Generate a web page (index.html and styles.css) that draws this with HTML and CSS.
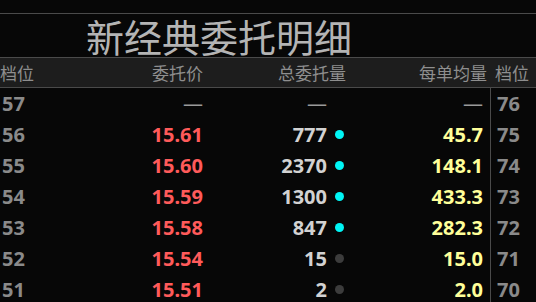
FILE: index.html
```html
<!DOCTYPE html>
<html>
<head>
<meta charset="utf-8">
<link rel="stylesheet" href="styles.css">
</head>
<body>
<div class="page">
  <div class="title">新经典委托明细</div>
  <div class="head">
    <span class="h-lvl">档位</span>
    <span class="h-price">委托价</span>
    <span class="h-vol">总委托量</span>
    <span class="h-avg">每单均量</span>
    <span class="h-lvl2">档位</span>
  </div>
  <div class="rows">
    <div class="row"><span class="lvl">57</span><span class="price dash">—</span><span class="vol dash">—</span><span class="dotc"></span><span class="avg dash">—</span><span class="lvl2">76</span></div>
    <div class="row"><span class="lvl">56</span><span class="price">15.61</span><span class="vol">777</span><span class="dotc"><i class="dot on"></i></span><span class="avg">45.7</span><span class="lvl2">75</span></div>
    <div class="row"><span class="lvl">55</span><span class="price">15.60</span><span class="vol">2370</span><span class="dotc"><i class="dot on"></i></span><span class="avg">148.1</span><span class="lvl2">74</span></div>
    <div class="row"><span class="lvl">54</span><span class="price">15.59</span><span class="vol">1300</span><span class="dotc"><i class="dot on"></i></span><span class="avg">433.3</span><span class="lvl2">73</span></div>
    <div class="row"><span class="lvl">53</span><span class="price">15.58</span><span class="vol">847</span><span class="dotc"><i class="dot on"></i></span><span class="avg">282.3</span><span class="lvl2">72</span></div>
    <div class="row"><span class="lvl">52</span><span class="price">15.54</span><span class="vol">15</span><span class="dotc"><i class="dot off"></i></span><span class="avg">15.0</span><span class="lvl2">71</span></div>
    <div class="row"><span class="lvl">51</span><span class="price">15.51</span><span class="vol">2</span><span class="dotc"><i class="dot off"></i></span><span class="avg">2.0</span><span class="lvl2">70</span></div>
  </div>
</div>
</body>
</html>
```
FILE: styles.css
```css
html, body {
  margin: 0;
  padding: 0;
  background: #070707;
  overflow: hidden;
}
.page {
  width: 536px;
  height: 302px;
  padding-top: 13px;
  box-sizing: border-box;
  font-family: "Noto Sans", "Noto Sans CJK SC", sans-serif;
}
.title {
  border-top: 1px solid #4a4a4a;
  height: 43px;
  padding-left: 86px;
  font-family: "Noto Sans CJK SC", sans-serif;
  font-size: 38px;
  line-height: 43px;
  color: #b4b4b4;
  white-space: nowrap;
}
.head {
  display: grid;
  grid-template-columns: 60px 143px 143px 141px 1fr;
  height: 29px;
  border-top: 1px solid #4a4a4a;
  border-bottom: 1px solid #4a4a4a;
  background: #1d1d1d;
  font-family: "Noto Sans CJK SC", sans-serif;
  font-size: 17px;
  line-height: 29px;
  color: #8e8e8e;
  white-space: nowrap;
}
.h-lvl { padding-left: 0; }
.h-price, .h-vol, .h-avg { text-align: right; }
.h-lvl2 { padding-left: 8px; }
.rows {
  display: flex;
  flex-direction: column;
}
.row {
  display: grid;
  grid-template-columns: 60px 143px 124px 24px 132px 7px 1fr;
  height: 31px;
  line-height: 31px;
  font-size: 20px;
  font-weight: 700;
  white-space: nowrap;
}
.row > span:nth-child(6) { grid-column: 7; }
.lvl { padding-left: 2px; color: #8a8a8a; }
.price { text-align: right; color: #ff5a5a; }
.vol { text-align: right; color: #d2d2d2; }
.avg { text-align: right; color: #ffff99; }
.dash { color: #9a9a9a; font-weight: 400; }
.lvl2 {
  border-left: 1px solid #4a4a4a;
  padding-left: 6px;
  color: #8a8a8a;
}
.dotc {
  display: flex;
  align-items: center;
  padding-left: 8px;
}
.dot {
  display: block;
  width: 9px;
  height: 9px;
  border-radius: 50%;
}
.dot.on { background: #00f5f5; }
.dot.off { background: #3c3c3c; }
```
